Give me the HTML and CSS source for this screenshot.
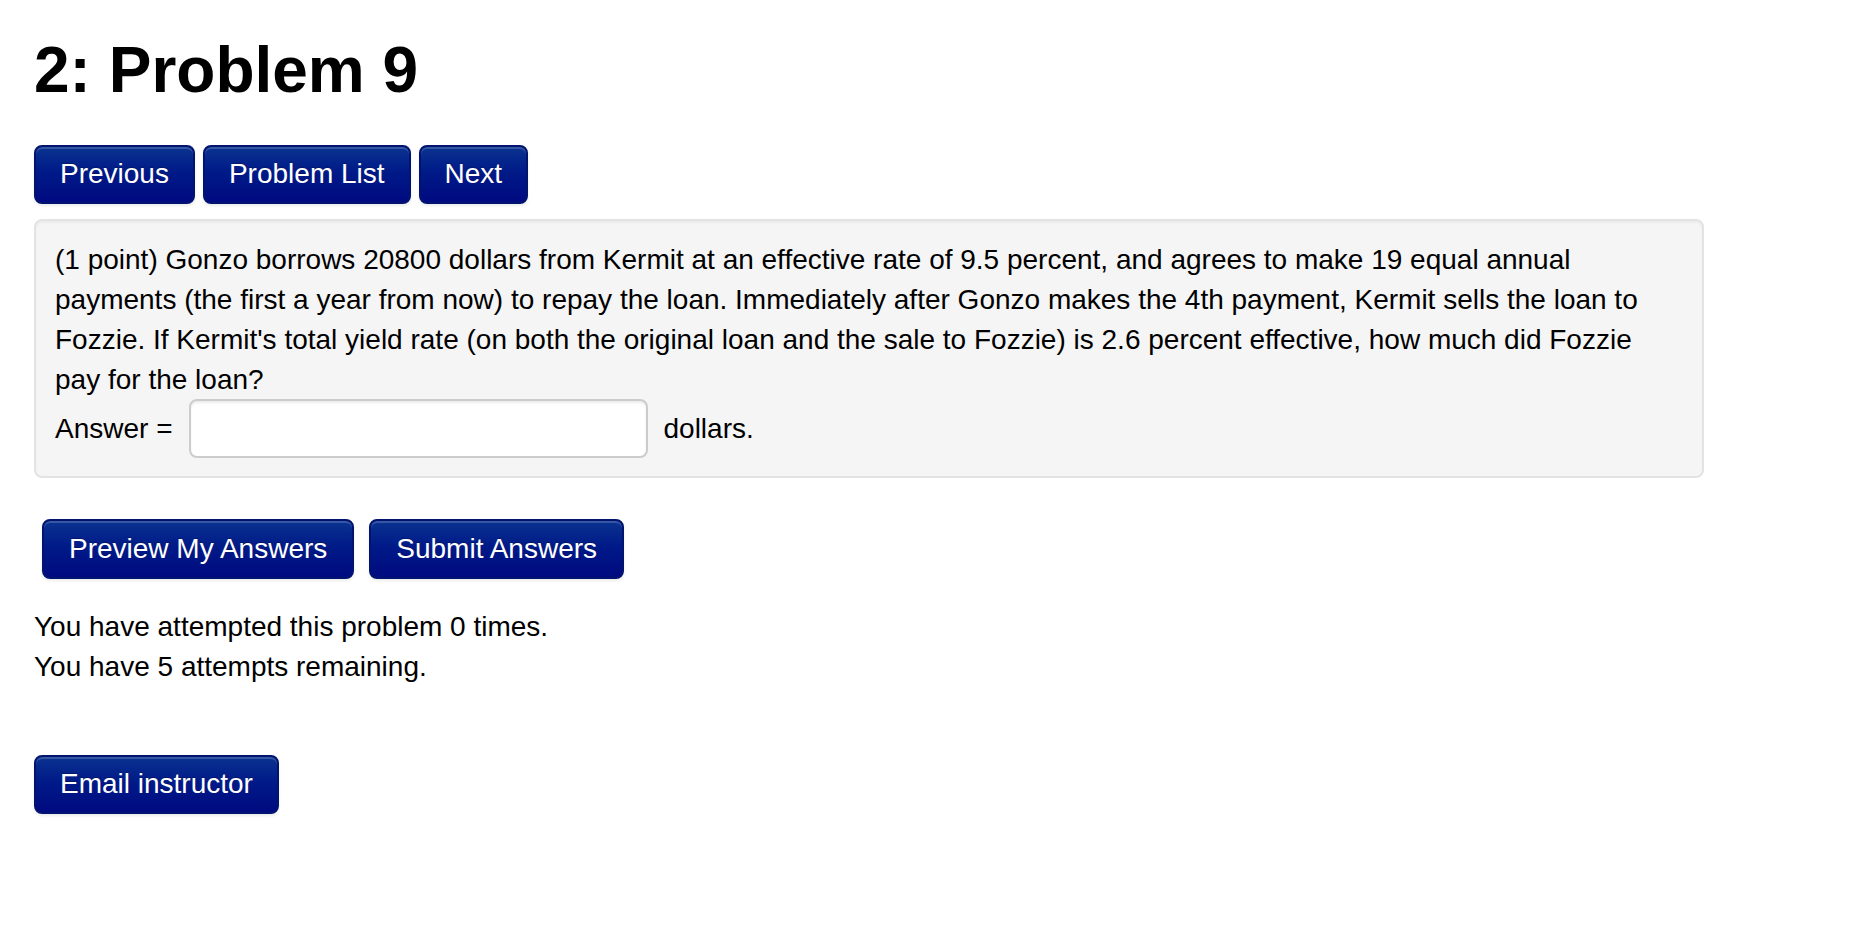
FILE: index.html
```html
<!DOCTYPE html>
<html lang="en">
<head>
<meta charset="utf-8">
<title>2: Problem 9</title>
<link rel="stylesheet" href="styles.css">
</head>
<body>
<div class="page">
  <h2 class="title">2: Problem 9</h2>
  <div class="nav">
    <button class="btn">Previous</button>
    <button class="btn">Problem List</button>
    <button class="btn">Next</button>
  </div>
  <div class="well">
    <div class="problem-text">(1 point) Gonzo borrows 20800 dollars from Kermit at an effective rate of 9.5 percent, and agrees to make 19 equal annual payments (the first a year from now) to repay the loan. Immediately after Gonzo makes the 4th payment, Kermit sells the loan to Fozzie. If Kermit's total yield rate (on both the original loan and the sale to Fozzie) is 2.6 percent effective, how much did Fozzie pay for the loan?</div>
    <div class="answer-row">
      <span>Answer =</span>
      <input class="answer-input" type="text" aria-label="Answer">
      <span>dollars.</span>
    </div>
  </div>
  <div class="actions">
    <button class="btn btn-tall">Preview My Answers</button>
    <button class="btn btn-tall">Submit Answers</button>
  </div>
  <div class="attempts">
    <div>You have attempted this problem 0 times.</div>
    <div>You have 5 attempts remaining.</div>
  </div>
  <div class="email">
    <button class="btn">Email instructor</button>
  </div>
</div>
</body>
</html>
```
FILE: styles.css
```css
html, body {
  margin: 0;
  padding: 0;
  background: #fff;
}

body {
  font-family: "Liberation Sans", Arial, Helvetica, sans-serif;
  font-size: 28px;
  line-height: 40px;
  color: #000;
}

.page {
  padding: 30px 0 40px 34px;
}

.title {
  margin: 0;
  font-size: 64px;
  line-height: 80px;
  font-weight: bold;
  color: #000;
}

.nav {
  display: flex;
  gap: 8px;
  margin-top: 35px;
}

.btn {
  font-family: inherit;
  font-size: 28px;
  line-height: 40px;
  color: #fff;
  padding: 7px 24px 8px;
  border: 2px solid #001470;
  border-radius: 8px;
  background: linear-gradient(to bottom, #0a3390 0%, #001a88 45%, #000a80 100%);
  box-shadow: inset 0 2px 0 rgba(255, 255, 255, 0.18), 0 2px 3px rgba(0, 0, 0, 0.08);
  text-shadow: 0 -1px 0 rgba(0, 0, 0, 0.25);
  cursor: pointer;
}

.btn-tall {
  padding: 8px 25px 8px;
}

.well {
  margin-top: 15px;
  box-sizing: border-box;
  width: 1670px;
  background: #f5f5f5;
  border: 2px solid #e3e3e3;
  border-radius: 8px;
  box-shadow: inset 0 2px 2px rgba(0, 0, 0, 0.04);
  padding: 19px 19px 18px;
}

.problem-text {
  line-height: 40px;
}

.answer-row {
  display: flex;
  align-items: center;
  gap: 16px;
  margin-top: -1px;
}

.answer-input {
  box-sizing: border-box;
  width: 459px;
  height: 59px;
  margin: 0;
  padding: 8px 12px;
  font-family: inherit;
  font-size: 28px;
  background: #fff;
  border: 2px solid #cccccc;
  border-radius: 8px;
  box-shadow: inset 0 2px 2px rgba(0, 0, 0, 0.075);
}

.actions {
  display: flex;
  gap: 15px;
  margin-top: 41px;
  padding-left: 8px;
}

.attempts {
  margin-top: 28px;
}

.email {
  margin-top: 68px;
}
```
